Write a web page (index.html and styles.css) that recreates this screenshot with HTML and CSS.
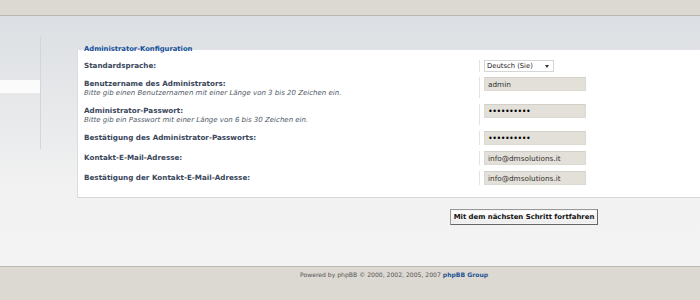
FILE: index.html
```html
<!DOCTYPE html>
<html lang="de">

<head>
    <meta charset="UTF-8">
    <title>phpBB Installation</title>
    <link rel="stylesheet" href="styles.css">
</head>

<body>
    <div id="page-header"></div>

    <div id="page-body">
        <div id="menu">
            <ul>
                <li class="menu_item"></li>
                <li class="menu_item menu_active"></li>
            </ul>
        </div>

        <div id="main">
            <div class="panel">
                <h3 class="legend">Administrator-Konfiguration</h3>

                <dl class="row row_select">
                    <dt><label>Standardsprache:</label></dt>
                    <dd>
                        <div class="fake_select">Deutsch (Sie)<span class="arrow"></span></div>
                    </dd>
                </dl>
                <dl class="row row_explain">
                    <dt>
                        <label>Benutzername des Administrators:</label>
                        <span class="explain">Bitte gib einen Benutzernamen mit einer Länge von 3 bis 20 Zeichen ein.</span>
                    </dt>
                    <dd><input type="text" class="inputbox" value="admin"></dd>
                </dl>
                <dl class="row row_explain">
                    <dt>
                        <label>Administrator-Passwort:</label>
                        <span class="explain">Bitte gib ein Passwort mit einer Länge von 6 bis 30 Zeichen ein.</span>
                    </dt>
                    <dd><input type="password" class="inputbox" value="xxxxxxxxxx"></dd>
                </dl>
                <dl class="row">
                    <dt><label>Bestätigung des Administrator-Passworts:</label></dt>
                    <dd><input type="password" class="inputbox" value="xxxxxxxxxx"></dd>
                </dl>
                <dl class="row">
                    <dt><label>Kontakt-E-Mail-Adresse:</label></dt>
                    <dd><input type="text" class="inputbox" value="info@dmsolutions.it"></dd>
                </dl>
                <dl class="row row_last">
                    <dt><label>Bestätigung der Kontakt-E-Mail-Adresse:</label></dt>
                    <dd><input type="text" class="inputbox" value="info@dmsolutions.it"></dd>
                </dl>
            </div>

            <div class="submit_row">
                <button class="button1">Mit dem nächsten Schritt fortfahren</button>
            </div>
        </div>
    </div>

    <div id="page-footer">
        Powered by phpBB &copy; 2000, 2002, 2005, 2007 <a href="#">phpBB Group</a>
    </div>
</body>

</html>
```

FILE: styles.css
```css
* {
    margin: 0;
    padding: 0;
    box-sizing: border-box;
}

body {
    font-family: "DejaVu Sans", Verdana, sans-serif;
    background-color: #dcd8d2;
    overflow: hidden;
}

ul li {
    list-style: none;
}

a {
    text-decoration: none;
}

#page-header {
    height: 16px;
    background-color: #dcd8d2;
    border-bottom: 1px solid #b9b7b2;
}

#page-body {
    display: flex;
    height: 251px;
    background: linear-gradient(to bottom, #dcdfe3 0%, #e6e8ea 35%, #f2f2f2 70%, #f3f3f3 100%);
    border-bottom: 1px solid #bcb9b4;
}

/* left menu */
#menu {
    width: 41px;
    margin-top: 20px;
    height: 113px;
    border-right: 1px solid #d3d5d8;
}

.menu_item {
    height: 13px;
    margin-bottom: 31px;
}

.menu_active {
    background-color: #fbfbfc;
}

#main {
    flex: 1;
    padding: 34px 0 0 36px;
}

.panel {
    background-color: #fff;
    border-left: 1px solid #dcdcdc;
    border-bottom: 1px solid #d6d6d6;
    padding: 10px 0 13px 6px;
    height: 148px;
}

.legend {
    font-size: 6.8px;
    font-weight: bold;
    color: #14509a;
    margin: -15px 0 6px 0;
    height: 9px;
    line-height: 9px;
}

.row {
    display: flex;
    margin-bottom: 6px;
}

.row dt {
    width: 395px;
    padding-top: 2px;
}

.row label {
    display: block;
    font-size: 7.2px;
    font-weight: bold;
    color: #3a475c;
    line-height: 9px;
}

.explain {
    display: block;
    font-size: 7px;
    font-style: italic;
    color: #4f5967;
    line-height: 10px;
}

.row dd {
    border-left: 1px solid #e3e3e3;
    padding-left: 4px;
    min-height: 13px;
}

.row_select {
    margin-bottom: 5px;
}

.row_select dd {
    min-height: 11px;
}

.row_select dt {
    padding-top: 1px;
}

.row_explain dd {
    height: 21px;
}

.row_last {
    margin-bottom: 0;
}

.fake_select {
    position: relative;
    width: 70px;
    height: 12px;
    border: 1px solid #d6d6d6;
    background-color: #fff;
    font-size: 6.8px;
    color: #222;
    line-height: 10px;
    padding-left: 2px;
}

.arrow {
    position: absolute;
    right: 4px;
    top: 4px;
    border-left: 2px solid transparent;
    border-right: 2px solid transparent;
    border-top: 3px solid #333;
}

.inputbox {
    display: block;
    width: 102px;
    height: 14px;
    background-color: #e3e0d9;
    border: 1px solid #dcd9d2;
    border-top-color: #d3d0c9;
    font-family: "DejaVu Sans", Verdana, sans-serif;
    font-size: 7.3px;
    color: #333;
    padding: 0 3px;
    outline: none;
}

input[type="password"] {
    font-size: 8px;
    color: #000;
    letter-spacing: -0.5px;
}

.submit_row {
    padding: 11px 0 0 373px;
}

.button1 {
    display: block;
    width: 148px;
    height: 16px;
    font-family: "DejaVu Sans", Verdana, sans-serif;
    font-size: 6.9px;
    font-weight: bold;
    color: #111;
    background: linear-gradient(to bottom, #ffffff, #ebebeb);
    border: 1px solid #777;
    border-color: #999 #666 #666 #999;
    box-shadow: inset 0 0 0 1px #f4f4f4;
}

#page-footer {
    height: 33px;
    padding: 2px 0 0 300px;
    font-size: 6.1px;
    color: #555;
    line-height: 11px;
}

#page-footer a {
    color: #1f5494;
    font-weight: bold;
}
```
